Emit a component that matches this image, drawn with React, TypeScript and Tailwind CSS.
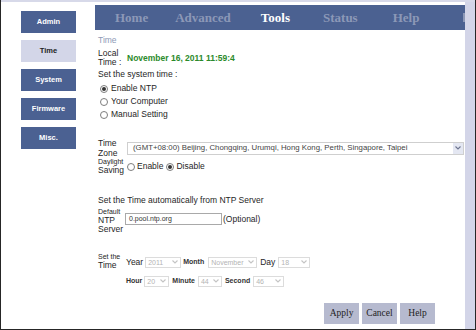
import React from "react";

const SANS = "font-['Liberation_Sans',Arial,sans-serif]";
const SERIF = "font-['Liberation_Serif','Times_New_Roman',serif]";

function Chevron({ color = "#9aa0b0" }: { color?: string }) {
  return (
    <svg width="6" height="4" viewBox="0 0 6 4" fill="none">
      <path d="M0.5 0.5 L3 3 L5.5 0.5" stroke={color} strokeWidth="1.1" />
    </svg>
  );
}

function Radio({ checked }: { checked?: boolean }) {
  return (
    <span className="w-[8px] h-[8px] rounded-full border border-[#7d7d7d] bg-white flex items-center justify-center shrink-0">
      {checked && <span className="w-[4px] h-[4px] rounded-full bg-[#333]" />}
    </span>
  );
}

function DSel({ value, className }: { value: string; className: string }) {
  return (
    <span
      className={`h-[11px] border border-[#dcdcdc] bg-white flex items-center justify-between pl-[2px] pr-[1px] text-[7px] text-[#b4b4b4] leading-none whitespace-nowrap overflow-hidden ${className}`}
    >
      <span>{value}</span>
      <span className="w-[8px] h-[9px] flex items-center justify-center shrink-0">
        <Chevron color="#c4c4c4" />
      </span>
    </span>
  );
}

const side = [
  { t: "Admin", a: false },
  { t: "Time", a: true },
  { t: "System", a: false },
  { t: "Firmware", a: false },
  { t: "Misc.", a: false },
];

export default function App() {
  return (
    <div
      className={`w-[476px] h-[330px] bg-white border-l border-r border-b border-[#262626] flex flex-col overflow-hidden ${SANS}`}
    >
      <div className="h-[2px] bg-[#d7d9e9] shrink-0" />
      <div className="flex flex-1">
        {/* Sidebar */}
        <aside className="w-[94px] pt-[9px] pl-[20px] flex flex-col gap-[7px] shrink-0">
          {side.map((s) => (
            <div
              key={s.t}
              className={`w-[55px] h-[22px] flex items-center justify-center text-[7.5px] font-bold ${
                s.a ? "bg-[#d3d6e8] text-[#222]" : "bg-[#4b6192] text-white"
              }`}
            >
              {s.t}
            </div>
          ))}
        </aside>

        {/* Main */}
        <main className="w-[370px] flex flex-col shrink-0">
          <nav
            className={`mt-[3px] h-[25px] bg-[#4b6191] flex items-center overflow-hidden whitespace-nowrap text-[13px] font-bold ${SERIF} shadow-[1px_0_0_#3c4f7a]`}
          >
            <span className="ml-[20px] text-[#8c98b7]">Home</span>
            <span className="ml-[27px] text-[#8c98b7]">Advanced</span>
            <span className="ml-[30px] text-white">Tools</span>
            <span className="ml-[33px] text-[#8c98b7]">Status</span>
            <span className="ml-[35px] text-[#8c98b7]">Help</span>
            <span className="ml-[44px] w-[2px] h-[9px] bg-[#8c98b7]" />
          </nav>

          <div className="pl-[3px] text-[8.5px] text-[#262626]">
            <div className="mt-[5px] h-[10px] leading-[10px] text-[#8d99b6]">Time</div>

            <div className="mt-[4px] flex items-center">
              <div className="w-[29px] leading-[9px]">
                <div>Local</div>
                <div>Time :</div>
              </div>
              <div className="text-[8.5px] font-bold text-[#2b8a2b]">November 16, 2011 11:59:4</div>
            </div>

            <div className="mt-[2px] leading-[10px] h-[10px]">Set the system time :</div>

            <div className="mt-[3px] flex flex-col">
              {[
                ["Enable NTP", true],
                ["Your Computer", false],
                ["Manual Setting", false],
              ].map(([t, c]) => (
                <div key={t as string} className="h-[13px] flex items-center pl-[2px] gap-[3px]">
                  <Radio checked={c as boolean} />
                  <span>{t as string}</span>
                </div>
              ))}
            </div>

            <div className="mt-[17px] flex items-center">
              <div className="w-[29px] leading-[10px] shrink-0">
                <div>Time</div>
                <div>Zone</div>
              </div>
              <div className="flex-1 mr-[1px] h-[13px] border border-[#cfcfcf] bg-white flex items-center justify-between pl-[5px] text-[7.8px] text-[#444] whitespace-nowrap overflow-hidden">
                <span>(GMT+08:00) Beijing, Chongqing, Urumqi, Hong Kong, Perth, Singapore, Taipei</span>
                <span className="w-[10px] h-[11px] bg-[#e4e7f2] flex items-center justify-center">
                  <Chevron color="#6d7590" />
                </span>
              </div>
            </div>

            <div className="flex items-center">
              <div className="w-[29px] shrink-0">
                <div className="text-[7px] leading-[8px]">Daylight</div>
                <div className="leading-[9px]">Saving</div>
              </div>
              <div className="flex items-center">
                <Radio />
                <span className="ml-[2px]">Enable</span>
                <span className="ml-[3px]">
                  <Radio checked />
                </span>
                <span className="ml-[2px]">Disable</span>
              </div>
            </div>

            <div className="mt-[20px] leading-[10px] h-[10px]">Set the Time automatically from NTP Server</div>

            <div className="mt-[3px] flex items-start">
              <div className="w-[27px] shrink-0">
                <div className="text-[7px] leading-[8px]">Default</div>
                <div className="leading-[9px]">NTP</div>
                <div className="leading-[9px]">Server</div>
              </div>
              <div className="mt-[5px] flex items-center">
                <div className="w-[97px] h-[12px] border border-[#a9a9a9] bg-white flex items-center pl-[3px] text-[7px] text-[#333]">
                  0.pool.ntp.org
                </div>
                <span className="ml-[1px]">(Optional)</span>
              </div>
            </div>

            <div className="mt-[19px] flex items-start">
              <div className="w-[28px] shrink-0">
                <div className="text-[7px] leading-[8px]">Set the</div>
                <div className="leading-[9px]">Time</div>
              </div>
              <div className="flex flex-col">
                <div className="mt-[3px] h-[12px] flex items-center">
                  <span>Year</span>
                  <DSel value="2011" className="ml-[2px] w-[36px]" />
                  <span className="ml-[2px] font-bold text-[7px] text-[#333]">Month</span>
                  <DSel value="November" className="ml-[4px] w-[49px]" />
                  <span className="ml-[3px]">Day</span>
                  <DSel value="18" className="ml-[3px] w-[32px]" />
                </div>
                <div className="mt-[7px] h-[12px] flex items-center">
                  <span className="font-bold text-[7px] text-[#333]">Hour</span>
                  <DSel value="20" className="ml-[2px] w-[25px]" />
                  <span className="ml-[3px] font-bold text-[7px] text-[#333]">Minute</span>
                  <DSel value="44" className="ml-[3px] w-[24px]" />
                  <span className="ml-[3px] font-bold text-[7px] text-[#333]">Second</span>
                  <DSel value="46" className="ml-[3px] w-[31px]" />
                </div>
              </div>
            </div>
          </div>

          <div className={`mt-[16px] flex justify-end gap-[3px] pr-[30px] ${SERIF}`}>
            {["Apply", "Cancel", "Help"].map((b) => (
              <div
                key={b}
                className="w-[35px] h-[21px] bg-[#b6bacf] flex items-center justify-center text-[9.5px] text-[#1e1e1e]"
              >
                {b}
              </div>
            ))}
          </div>
        </main>

        <div className="w-[10px] bg-[#d3d5e8] shrink-0" />
      </div>
    </div>
  );
}
